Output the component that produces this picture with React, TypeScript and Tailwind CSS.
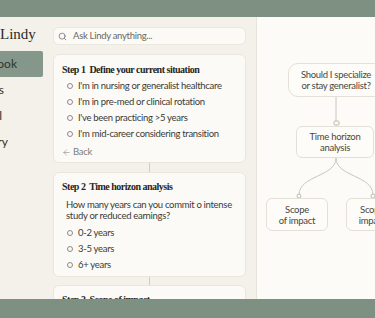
import { Search, ArrowLeft } from "lucide-react";

const sans = { fontFamily: "Lato, 'Noto Sans', sans-serif" };
const serif = { fontFamily: "'Liberation Serif', 'DejaVu Serif', serif" };

const Radio = ({ label }: { label: string }) => (
    <div className="flex items-center h-[16px] pl-[5px] gap-[5px] text-[9.5px] tracking-[-0.3px] text-[#3a3a36]">
        <span className="w-[6px] h-[6px] rounded-full border border-[#8c8a84] shrink-0" />
        <span className="whitespace-nowrap">{label}</span>
    </div>
);

const SideItem = ({ label, edge, active }: { label: string; edge: string; active?: boolean }) => (
    <div className={`h-[26px] flex items-center ${active ? "bg-[#84978a] rounded-r-[2px] w-[43px]" : ""}`}>
        <div className={`flex justify-end overflow-hidden ${edge}`}>
            <span className="whitespace-nowrap text-[12px] text-[#30332f]">{label}</span>
        </div>
    </div>
);

const Heading = ({ children }: { children: React.ReactNode }) => (
    <div className="text-[10px] tracking-[-0.5px] font-bold text-[#262622] whitespace-nowrap h-[14px] leading-[14px]" style={serif}>
        {children}
    </div>
);

const node = "absolute border border-[#e3e0d7] bg-[#fdfcf8] flex items-center justify-center text-center text-[9.5px] tracking-[-0.3px] leading-[11px] text-[#474743]";

export default function App() {
    return (
        <div className="w-[375px] h-[318px] overflow-hidden bg-[#7e9081] flex flex-col" style={sans}>
            <div className="h-[17px] shrink-0" />
            <div className="flex-1 flex min-h-0 bg-[#f3f1ea]">
                {/* sidebar */}
                <div className="w-[48px] shrink-0 overflow-hidden">
                    <div className="h-[34px] flex items-center">
                        <span className="text-[15px] leading-none text-[#2a2c28]" style={serif}>Lindy</span>
                    </div>
                    <div className="flex flex-col">
                        <SideItem label="Playbook" edge="w-[17px]" active />
                        <SideItem label="Tools" edge="w-[4px]" />
                        <SideItem label="Journal" edge="w-[2px]" />
                        <SideItem label="History" edge="w-[8px]" />
                    </div>
                </div>

                {/* main column */}
                <div className="w-[208px] shrink-0 overflow-hidden pl-[5px] pr-[10px] pt-[10px]">
                    <div className="h-[18px] rounded-[6px] bg-[#fbfaf6] border border-[#ebe8df] flex items-center gap-[6px] px-[4px]">
                        <Search size={9} strokeWidth={2} className="text-[#6f6e68]" />
                        <span className="text-[9.5px] tracking-[-0.3px] text-[#6a6964]">Ask Lindy anything...</span>
                    </div>

                    <div className="mt-[9px] h-[109px] rounded-[6px] bg-[#fbfaf6] border border-[#e9e6dd] px-[8px] pt-[8px]">
                        <Heading>Step 1&nbsp; Define your current situation</Heading>
                        <div className="mt-[1px]">
                            <Radio label="I'm in nursing or generalist healthcare" />
                            <Radio label="I'm in pre-med or clinical rotation" />
                            <Radio label="I've been practicing >5 years" />
                            <Radio label="I'm mid-career considering transition" />
                        </div>
                        <div className="mt-[2px] flex items-center gap-[2px] text-[9.5px] tracking-[-0.3px] text-[#807e78] h-[16px]">
                            <ArrowLeft size={9} strokeWidth={1.5} />
                            <span>Back</span>
                        </div>
                    </div>
                    <div className="h-[9px] flex justify-center">
                        <div className="w-px h-full bg-[#cfccc3]" />
                    </div>

                    <div className="h-[105px] rounded-[6px] bg-[#fbfaf6] border border-[#e9e6dd] px-[8px] pt-[7px]">
                        <Heading>Step 2&nbsp; Time horizon analysis</Heading>
                        <div className="mt-[5px] pl-[4px] text-[9.5px] tracking-[-0.3px] leading-[11px] text-[#3a3a36] whitespace-nowrap">
                            How many years can you commit o intense
                            <br />
                            study or reduced earnings?
                        </div>
                        <div className="mt-[4px]">
                            <Radio label="0-2 years" />
                            <Radio label="3-5 years" />
                            <Radio label="6+ years" />
                        </div>
                    </div>
                    <div className="h-[8px] flex justify-center">
                        <div className="w-px h-full bg-[#cfccc3]" />
                    </div>

                    <div className="h-[60px] rounded-[6px] bg-[#fbfaf6] border border-[#e9e6dd] px-[8px] pt-[7px]">
                        <Heading>Step 3&nbsp; Scope of impact</Heading>
                    </div>
                </div>

                {/* flow canvas */}
                <div className="flex-1 relative overflow-hidden bg-[#fcfbf7] border-l border-[#e7e4db]">
                    <svg className="absolute left-0 top-0" width="120" height="282" fill="none">
                        <path d="M79 80 V104" stroke="#c9c6bd" strokeWidth="1" />
                        <rect x="77" y="104" width="5" height="4" rx="1" fill="#fcfbf7" stroke="#bdbab1" />
                        <path d="M79 141 C79 160 42 158 42 178" stroke="#c9c6bd" strokeWidth="1" />
                        <path d="M79 141 C79 160 116 158 116 178" stroke="#c9c6bd" strokeWidth="1" />
                        <circle cx="42" cy="179" r="2" fill="#fcfbf7" stroke="#bdbab1" />
                        <circle cx="116" cy="179" r="2" fill="#fcfbf7" stroke="#bdbab1" />
                    </svg>
                    <div className={`${node} left-[31px] top-[46px] w-[96px] h-[34px] rounded-[10px]`}>
                        Should I specialize<br />or stay generalist?
                    </div>
                    <div className={`${node} left-[39px] top-[109px] w-[78px] h-[32px] rounded-[6px]`}>
                        Time horizon<br />analysis
                    </div>
                    <div className={`${node} left-[9px] top-[181px] w-[62px] h-[33px] rounded-[6px]`}>
                        Scope<br />of impact
                    </div>
                    <div className={`${node} left-[89px] top-[181px] w-[52px] h-[33px] rounded-[6px]`}>
                        Scope<br />impact
                    </div>
                </div>
            </div>
            <div className="h-[19px] shrink-0" />
        </div>
    );
}
